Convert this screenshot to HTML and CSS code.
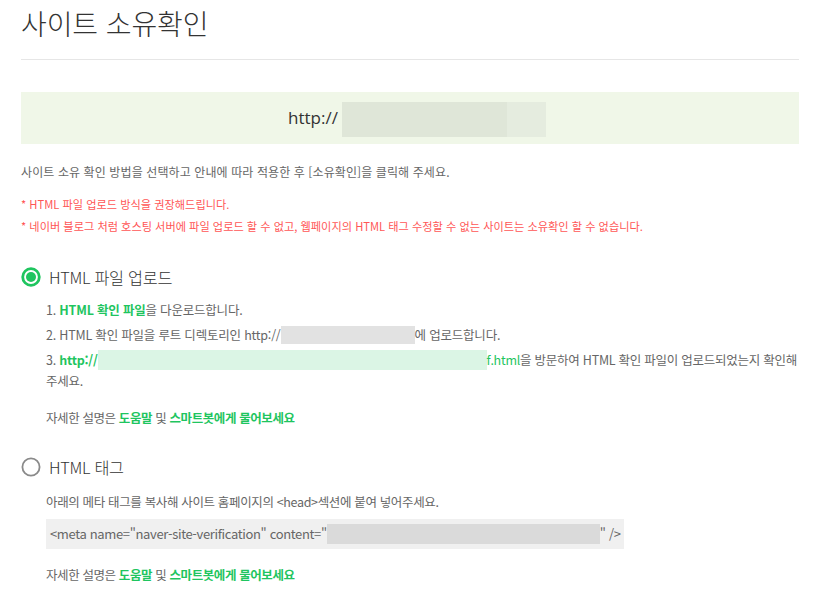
FILE: index.html
```html
<!DOCTYPE html>
<html lang="ko">
<head>
<meta charset="utf-8">
<title>사이트 소유확인</title>
<link rel="stylesheet" href="styles.css">
</head>
<body>
<div class="page">
  <h1 class="title">사이트 소유확인</h1>

  <div class="urlbox">
    <span class="url-prefix">http://</span><span class="mask-url"><span class="mask-a"></span><span class="mask-b"></span></span>
  </div>

  <p class="intro">사이트 소유 확인 방법을 선택하고 안내에 따라 적용한 후 [소유확인]을 클릭해 주세요.</p>

  <ul class="notes">
    <li>* HTML 파일 업로드 방식을 권장해드립니다.</li>
    <li>* 네이버 블로그 처럼 호스팅 서버에 파일 업로드 할 수 없고, 웹페이지의 HTML 태그 수정할 수 없는 사이트는 소유확인 할 수 없습니다.</li>
  </ul>

  <section class="method method-file">
    <div class="method-head">
      <svg class="radio" width="20" height="20" viewBox="0 0 20 20"><circle cx="10" cy="10" r="8.3" fill="none" stroke="#1fc55f" stroke-width="2.8"/><circle cx="10" cy="10" r="5" fill="#1fc55f"/></svg>
      <span class="method-title">HTML 파일 업로드</span>
    </div>
    <ol class="steps">
      <li>1. <a class="lnk">HTML 확인 파일</a>을 다운로드합니다.</li>
      <li>2. HTML 확인 파일을 루트 디렉토리인 http://<span class="mask-gray mask-root"></span>에 업로드합니다.</li>
      <li class="step-wrap">3. <a class="lnk">http://<span class="mask-green"></span></a><a class="lnk lnk-plain">f.html</a>을 방문하여 HTML 확인 파일이 업로드되었는지 확인해<br>주세요.</li>
    </ol>
    <p class="help">자세한 설명은 <a class="lnk">도움말</a> 및 <a class="lnk">스마트봇에게 물어보세요</a></p>
  </section>

  <section class="method method-tag">
    <div class="method-head">
      <svg class="radio" width="20" height="20" viewBox="0 0 20 20"><circle cx="10" cy="10" r="8.6" fill="none" stroke="#8a8a8a" stroke-width="1.8"/></svg>
      <span class="method-title">HTML 태그</span>
    </div>
    <p class="desc">아래의 메타 태그를 복사해 사이트 홈페이지의 &lt;head&gt;섹션에 붙여 넣어주세요.</p>
    <div class="code">&lt;meta name="naver-site-verification" content="<span class="mask-gray mask-code"></span>" /&gt;</div>
    <p class="help help-tag">자세한 설명은 <a class="lnk">도움말</a> 및 <a class="lnk">스마트봇에게 물어보세요</a></p>
  </section>
</div>
</body>
</html>
```

FILE: styles.css
```css
* { box-sizing: border-box; }
html, body { margin: 0; padding: 0; background: #fff; }
body {
  font-family: "Noto Sans CJK KR", "Noto Sans", sans-serif;
  color: #666;
}
.page {
  width: 778px;
  margin-left: 21px;
}
.title {
  margin: 0;
  padding-top: 8px;
  padding-bottom: 21px;
  font-size: 28px;
  line-height: 30px;
  font-weight: 300;
  color: #333;
  border-bottom: 1px solid #e6e6e6;
  letter-spacing: -0.1px;
}
.urlbox {
  margin-top: 32px;
  height: 52px;
  background: #f0f7e8;
  display: flex;
  align-items: center;
  padding-left: 267px;
}
.url-prefix {
  font-family: "Open Sans", sans-serif;
  font-size: 17px;
  color: #333;
  line-height: 20px;
  margin-right: 4px;
}
.mask-url { display: flex; height: 35px; margin-top: 3px; }
.mask-a { width: 165px; background: #dfe6d8; }
.mask-b { width: 39px; background: #e5ecdf; }

.intro {
  margin: 19px 0 0;
  font-size: 12px;
  line-height: 18px;
  letter-spacing: 0.1px;
}
.notes {
  list-style: none;
  margin: 12px 0 0;
  padding: 0;
  color: #ff5656;
  font-size: 11.2px;
  line-height: 22px;
  letter-spacing: 0;
}
.method-file { margin-top: 28px; }
.method-tag { margin-top: 27px; }
.method-head {
  display: flex;
  align-items: center;
  height: 24px;
}
.radio { margin-right: 8px; flex: none; }
.method-title {
  font-size: 16.3px;
  line-height: 24px;
  font-weight: 300;
  color: #333;
  letter-spacing: -0.3px;
}
.steps {
  list-style: none;
  margin: 10px 0 0;
  padding: 0 0 0 25px;
  font-size: 12.5px;
  line-height: 21px;
  letter-spacing: -0.2px;
  word-break: keep-all;
}
.steps li { margin-bottom: 4px; }
.steps li:last-child { margin-bottom: 0; }
.step-wrap { white-space: nowrap; letter-spacing: -0.25px; }
.lnk { color: #1fc55f; text-decoration: none; font-weight: bold; }
.lnk-plain { font-weight: normal; }
.mask-gray {
  display: inline-block;
  background: #e2e2e2;
  vertical-align: middle;
}
.mask-root { width: 134px; height: 18px; margin-top: -3px; }
.mask-green {
  display: inline-block;
  width: 389px;
  height: 20px;
  background: #dbf5e5;
  vertical-align: middle;
  margin-top: -3px;
}
.help {
  margin: 16px 0 0 25px;
  font-size: 12.5px;
  line-height: 21px;
  letter-spacing: -0.4px;
}
.desc {
  margin: 11.5px 0 0 25px;
  font-size: 12.5px;
  line-height: 21px;
  letter-spacing: -0.35px;
}
.code {
  margin: 7.5px 0 0 25px;
  width: 578px;
  height: 30px;
  padding-left: 4px;
  background: #f0f0f0;
  font-size: 13px;
  line-height: 30px;
  letter-spacing: -0.35px;
  color: #666;
  white-space: nowrap;
}
.mask-code { width: 273px; height: 20px; margin-top: -3px; background: #dadada; }
.help-tag { margin-top: 14.5px; }
```
